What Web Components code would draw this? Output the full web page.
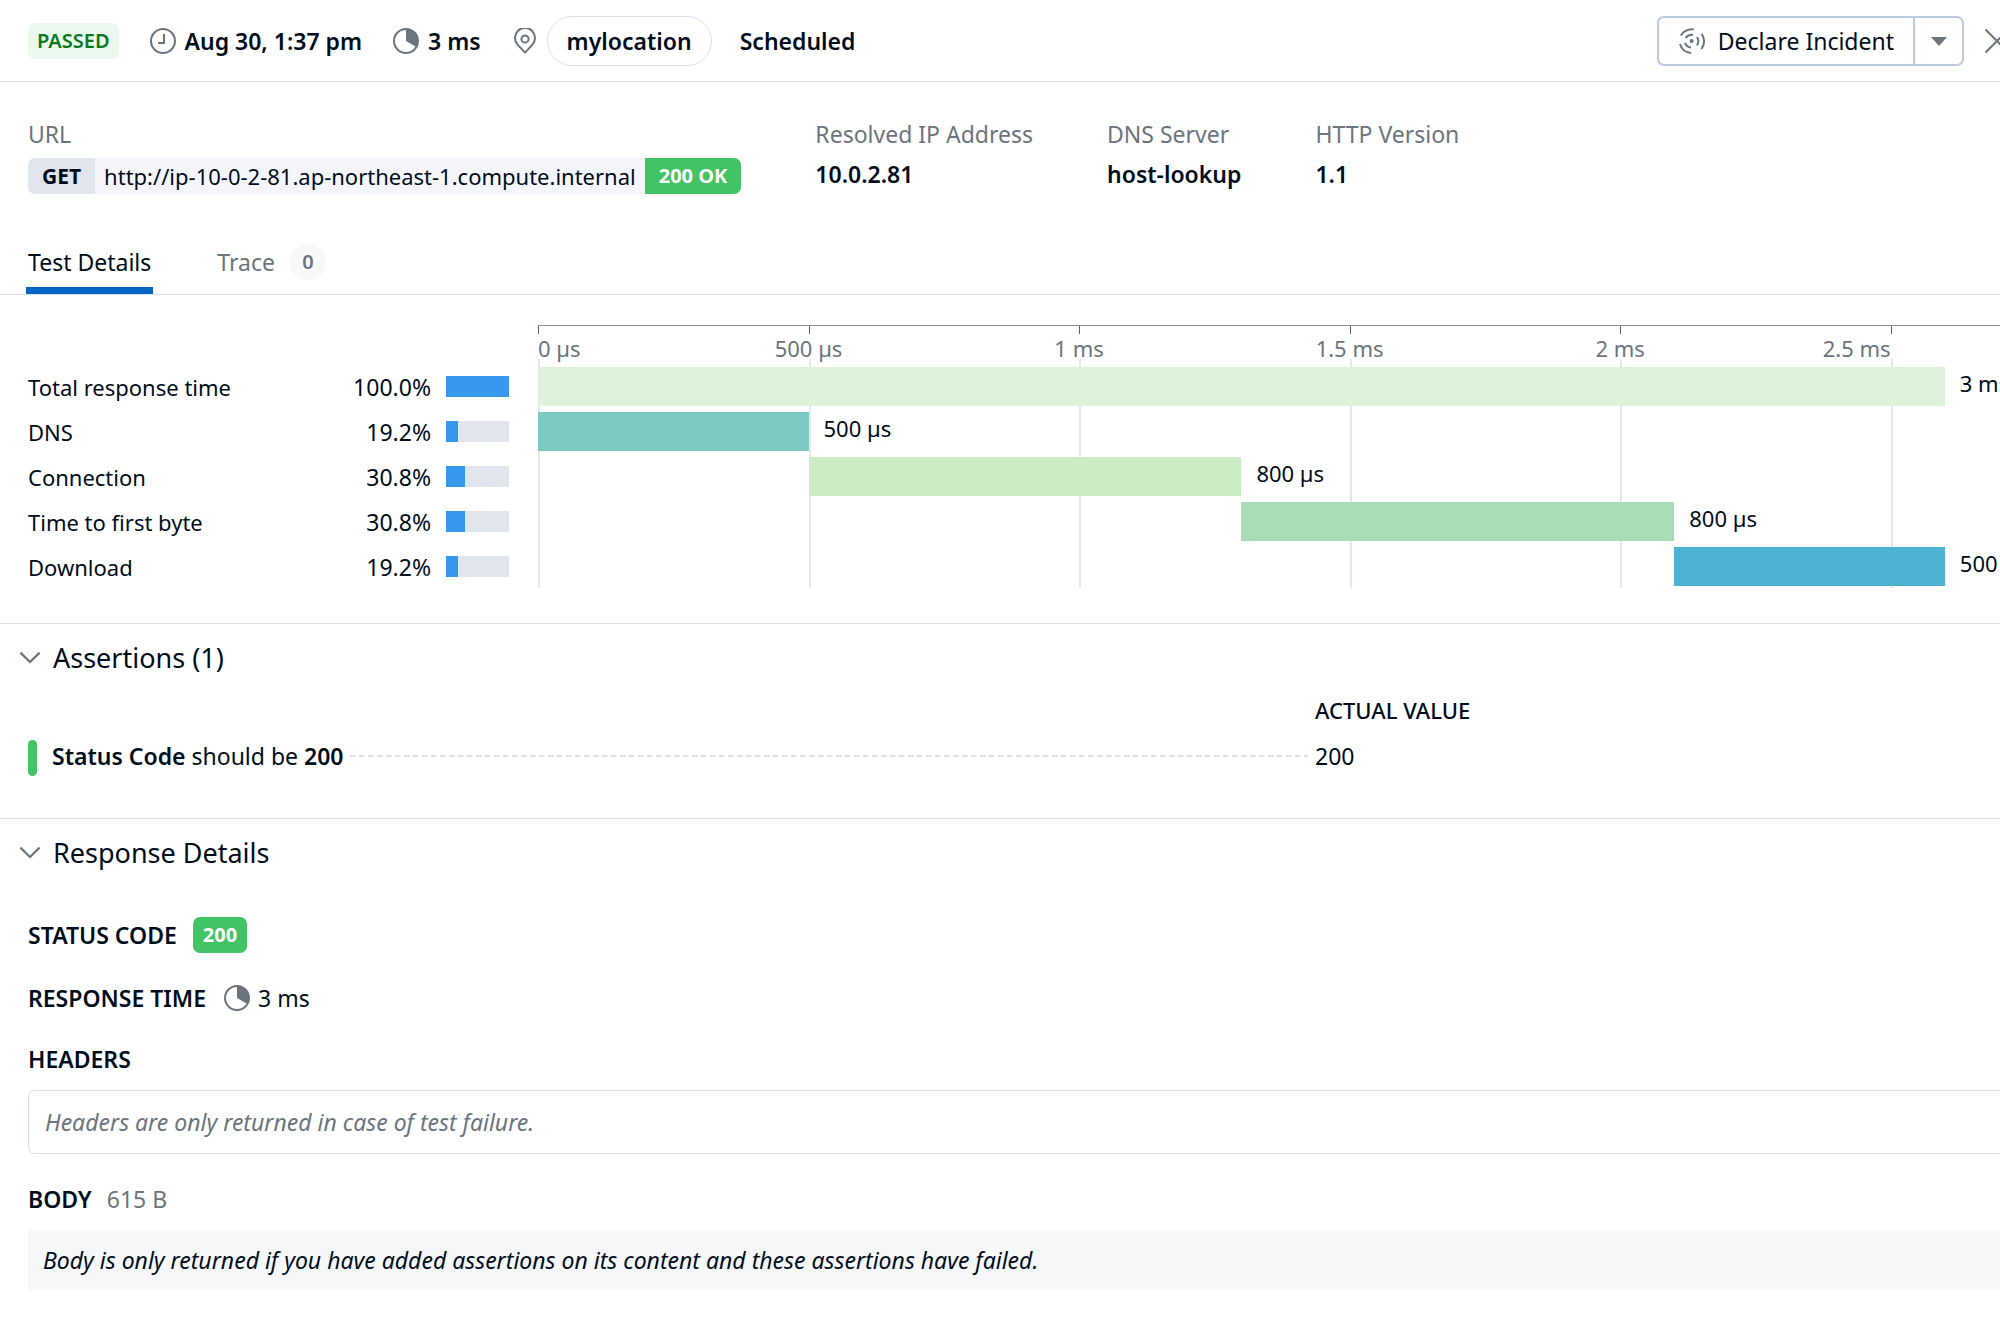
<!DOCTYPE html>
<html lang="en">
<head>
<meta charset="utf-8">
<title>Test result</title>
<style>
  :root {
    --text: #000d1c;
    --muted: #6b757f;
    --line: #dce0ea;
    --green: #41c464;
  }
  body {
    margin: 0;
    background: #fff;
    color: var(--text);
    font: 23px/32px "Noto Sans", sans-serif;
    overflow-x: hidden;
  }
</style>
</head>
<body>
<result-page></result-page>
<script>
const RESET = `
  *, *::before { box-sizing: border-box; }
  button { font: inherit; color: inherit; background: none; border: 0; padding: 0; margin: 0; cursor: pointer; }
  a { color: inherit; text-decoration: none; }
  h2, h3, p, dl, dd, dt, ul { margin: 0; padding: 0; font: inherit; list-style: none; }
`;
function define(name, css, html) {
  const template = document.createElement('template');
  template.innerHTML = `<style>${RESET}${css}</style>${html}`;
  customElements.define(name, class extends HTMLElement {
    constructor() {
      super();
      this.attachShadow({ mode: 'open' }).append(template.content.cloneNode(true));
    }
  });
}

/* ---------- icons ---------- */
const ICONS = {
  clock: [26, 26, '<circle cx="13" cy="13" r="12" fill="none" stroke="currentColor" stroke-width="2"/><path d="M14 6v9H8" fill="none" stroke="currentColor" stroke-width="2"/>'],
  pie: [26, 26, '<circle cx="13" cy="13" r="12" fill="none" stroke="currentColor" stroke-width="2"/><path d="M13 1v12l10.8 6.2A12.4 12.4 0 0 0 13 1z" fill="currentColor"/>'],
  pin: [26, 26, '<path d="M13 24.600 5.600 16.600A10 10 0 1 1 20.400 16.600z" fill="none" stroke="currentColor" stroke-width="2" stroke-linejoin="round"/><circle cx="13" cy="11" r="3.600" fill="none" stroke="currentColor" stroke-width="2"/>'],
  chevron: [22, 14, '<path d="M1.4 1.6 11 11 20.600 1.600" fill="none" stroke="currentColor" stroke-width="2.200"/>'],
  caret: [16, 9, '<path d="M0 0h16L8 9z" fill="currentColor"/>'],
  close: [26, 26, '<path d="M1.500 1.500l23 23M24.500 1.500l-23 23" fill="none" stroke="currentColor" stroke-width="2"/>'],
  siren: [26, 26, '<g fill="none" stroke="currentColor" stroke-width="2"><path d="M1.800 7.600C4.400 3.200 9 1 14.800 1.300"/><path d="M1 16C2.400 21.200 6.600 24.600 12.200 25"/><path d="M22.600 5.800C25.800 11 25.800 16.400 22.400 21"/><path d="M6.600 10C8.200 7.600 10.600 6.600 14 6.900"/><path d="M6 14.800C7 17.600 9 19.200 12 19.500"/><path d="M18 9C19.800 11.600 19.800 14.400 18 17.400"/></g><circle cx="12.600" cy="13" r="2" fill="currentColor"/>']
};
customElements.define('ui-icon', class extends HTMLElement {
  constructor() {
    super();
    this.attachShadow({ mode: 'open' });
  }
  connectedCallback() {
    const [w, h, body] = ICONS[this.getAttribute('name')];
    this.shadowRoot.innerHTML = `<style>:host{display:inline-flex;flex:none;color:var(--muted)}svg{display:block}</style>
      <svg width="${w}" height="${h}" viewBox="0 0 ${w} ${h}" aria-hidden="true">${body}</svg>`;
  }
});

/* ---------- small parts ---------- */
define('status-badge', `
  :host { display: inline-block; height: 36px; line-height: 36px; padding: 0 10px; border-radius: 7px;
    font-size: 20px; font-weight: 700; background: var(--green); color: #fff; }
  :host([tone="soft"]) { padding: 0 9px; background: #ebf8ee; color: #0d7a22; font-weight: 600; }
`, `<slot></slot>`);

define('info-item', `
  :host { display: block; }
  dl { display: flex; flex-direction: column; gap: 8px; }
  dt { color: var(--muted); }
  dd { font-weight: 600; }
`, `<dl><dt><slot name="label"></slot></dt><dd><slot></slot></dd></dl>`);

define('request-line', `
  :host { display: flex; height: 36px; line-height: 36px; font-size: 22px; font-weight: 400; border-radius: 7px; overflow: hidden; }
  span { padding: 0 14px; }
  .method { background: #e1e5ed; font-size: 21px; font-weight: 700; }
  .url { padding: 0 9px; background: #f5f6fb; }
  .status { background: var(--green); color: #fff; font-size: 20px; font-weight: 700; }
`, `<span class="method"><slot name="method"></slot></span><span class="url"><slot></slot></span><span class="status"><slot name="status"></slot></span>`);

/* ---------- header ---------- */
define('result-header', `
  :host { display: block; overflow: hidden; border-bottom: 1px solid var(--line); }
  header { display: flex; align-items: center; padding: 16px 0 15px 28px; font-weight: 600; white-space: nowrap; }
  .meta { display: flex; align-items: center; gap: 9px; margin-left: 31px; }
  .pill { display: block; height: 50px; line-height: 48px; padding: 0 19px;
    border: 1px solid var(--line); border-radius: 25px; }
  .trigger { margin-left: 28px; }
  .split { display: flex; height: 50px; margin-left: auto; border: 2px solid #bccbe4; border-radius: 7px; font-weight: 400; }
  .split button { display: flex; align-items: center; }
  .declare { gap: 13px; padding: 0 19px 0 20px; }
  .more { width: 49px; justify-content: center; border-left: 2px solid #bccbe4; }
  .close { display: flex; margin: 0 -10px 0 20px; }
`, `<header>
  <status-badge tone="soft">PASSED</status-badge>
  <span class="meta"><ui-icon name="clock"></ui-icon><time>Aug 30, 1:37 pm</time></span>
  <span class="meta"><ui-icon name="pie"></ui-icon><span>3 ms</span></span>
  <span class="meta"><ui-icon name="pin"></ui-icon><a class="pill" href="#">mylocation</a></span>
  <span class="trigger">Scheduled</span>
  <div class="split">
    <button class="declare" type="button"><ui-icon name="siren"></ui-icon><span>Declare Incident</span></button>
    <button class="more" type="button" aria-label="More actions"><ui-icon name="caret"></ui-icon></button>
  </div>
  <button class="close" type="button" aria-label="Close"><ui-icon name="close"></ui-icon></button>
</header>`);

define('request-summary', `
  :host { display: flex; gap: 74px; padding: 36px 28px 50px; }
`, `
  <info-item><span slot="label">URL</span><request-line><span slot="method">GET</span>http://ip-10-0-2-81.ap-northeast-1.compute.internal<span slot="status">200 OK</span></request-line></info-item>
  <info-item><span slot="label">Resolved IP Address</span>10.0.2.81</info-item>
  <info-item><span slot="label">DNS Server</span>host-lookup</info-item>
  <info-item><span slot="label">HTTP Version</span>1.1</info-item>
`);

define('result-tabs', `
  nav { display: flex; gap: 62px; padding-left: 26px; border-bottom: 1px solid var(--line); }
  :host { display: block; }
  a { display: flex; align-items: center; gap: 15px; height: 50px; padding: 0 2px 7px; border-bottom: 7px solid transparent; color: var(--muted); }
  a[aria-current] { color: var(--text); border-color: #0563c1; }
  .count { width: 36px; height: 36px; line-height: 36px; border-radius: 18px; text-align: center; background: #f7f8fa;
    font-size: 20px; font-weight: 600; }
`, `<nav><a href="#" aria-current="page">Test Details</a><a href="#">Trace <span class="count">0</span></a></nav>`);

/* ---------- timing chart ---------- */
const DOMAIN = 2702;
const PHASES = [
  { name: 'Total response time', share: '100.0%', start: 0, length: 2600, label: '3 ms', color: '#dff3da' },
  { name: 'DNS', share: '19.2%', start: 0, length: 500, label: '500 µs', color: '#7bcbc1' },
  { name: 'Connection', share: '30.8%', start: 500, length: 800, label: '800 µs', color: '#cdebc5' },
  { name: 'Time to first byte', share: '30.8%', start: 1300, length: 800, label: '800 µs', color: '#a9ddb5' },
  { name: 'Download', share: '19.2%', start: 2100, length: 500, label: '500 µs', color: '#4eb2d3' }
];
const TICKS = ['0 µs', '500 µs', '1 ms', '1.5 ms', '2 ms', '2.5 ms'];

define('phase-table', `
  :host { display: block; }
  table { width: 100%; border-collapse: collapse; }
  tr { height: 45px; }
  th, td { padding: 0; font-weight: 400; text-align: left; font-size: 22px; line-height: 32px; }
  .share { text-align: right; padding-right: 15px; font-size: 23px; }
  .meter { width: 63px; }
  .meter div { height: 21px; background: #e1e5ed; }
  .meter i { display: block; height: 100%; background: #3598ec; }
`, `<table><tbody>${PHASES.map(p => `<tr><th scope="row">${p.name}</th><td class="share">${p.share}</td>
  <td class="meter"><div><i style="width:${p.share}"></i></div></td></tr>`).join('')}</tbody></table>`);

define('phase-waterfall', `
  :host { display: block; overflow: hidden; font-size: 22px; white-space: nowrap; --step: calc(100% / ${DOMAIN / 500}); }
  .axis { display: flex; border-top: 1px solid #868d97; color: var(--muted); }
  .tick { flex: 0 0 var(--step); }
  .tick::before { content: ""; display: block; width: 1px; height: 8px; background: #59626d; }
  .tick span { display: block; width: 100%; line-height: 29px; margin-left: -50%; text-align: center; }
  .tick:first-child span { margin-left: 0; text-align: left; }
  .tick:last-child span { margin-left: -100%; text-align: right; }
  .plot { display: flex; flex-direction: column; gap: 6px; margin-top: -4px; padding: 8px 0 2px;
    background: repeating-linear-gradient(to right, #e4e7f0 0 2px, transparent 2px var(--step)); }
  .row { display: flex; height: 39px; }
  .bar { flex: none; }
  .row span { line-height: 33px; padding-left: 15px; }
`, `<div class="axis">${TICKS.map(t => `<div class="tick"><span>${t}</span></div>`).join('')}</div>
<div class="plot">${PHASES.map(p => `<div class="row"><div class="bar" style="margin-left:${p.start / DOMAIN * 100}%;width:${p.length / DOMAIN * 100}%;background:${p.color}"></div><span>${p.label}</span></div>`).join('')}</div>`);

define('timing-chart', `
  :host { display: flex; gap: 29px; padding: 30px 0 34px 28px; }
  phase-table { flex: 0 0 481px; padding-top: 39px; }
  phase-waterfall { flex: 1; min-width: 0; }
`, `<phase-table></phase-table><phase-waterfall></phase-waterfall>`);

/* ---------- collapsible sections ---------- */
define('fold-section', `
  :host { display: block; border-top: 1px solid var(--line); }
  h2 button { display: flex; align-items: center; gap: 12px; padding: 16px 19px 0; font-size: 27px; line-height: 36px; }
  .body { padding-left: 28px; }
`, `<h2><button type="button" aria-expanded="true"><ui-icon name="chevron"></ui-icon><slot name="title"></slot></button></h2><div class="body"><slot></slot></div>`);

define('assertion-list', `
  :host { display: grid; grid-template-columns: 1287fr 685fr; row-gap: 14px; padding: 18px 0 42px; }
  .head { grid-column: 2; font-size: 22px; font-weight: 500; }
  .rule { display: flex; height: 36px; }
  .mark { flex: none; width: 9px; margin-right: 15px; border-radius: 5px; background: var(--green); }
  b { font-weight: 600; }
  .leader { flex: 1; height: 2px; margin: 15px 7px 0;
    background: repeating-linear-gradient(to right, var(--line) 0 5px, transparent 6px 9px); }
`, `<div class="head">ACTUAL VALUE</div>
<div class="rule"><span class="mark"></span><p><b>Status Code</b> should be <b>200</b></p><span class="leader"></span></div>
<div class="actual">200</div>`);

define('response-details', `
  :host { display: flex; flex-direction: column; padding: 46px 0 31px; }
  .line { display: flex; align-items: center; height: 36px; margin-bottom: 27px; }
  h3 { font-weight: 600; }
  status-badge { margin-left: 16px; }
  .time { display: flex; align-items: center; gap: 8px; margin-left: 18px; }
  .headers { margin: 15px 0 29px; padding: 15px 16px; border: 1px solid var(--line); border-right: 0; border-radius: 7px 0 0 7px;
    font-style: italic; color: var(--muted); }
  .title { display: flex; gap: 15px; }
  .size { color: var(--muted); }
  .payload { margin-top: 15px; padding: 14px 15px; background: #f6f7f8; font-style: italic; }
`, `<div class="line"><h3>STATUS CODE</h3><status-badge>200</status-badge></div>
<div class="line"><h3>RESPONSE TIME</h3><span class="time"><ui-icon name="pie"></ui-icon><span>3 ms</span></span></div>
<h3>HEADERS</h3>
<p class="headers">Headers are only returned in case of test failure.</p>
<div class="title"><h3>BODY</h3><span class="size">615 B</span></div>
<p class="payload">Body is only returned if you have added assertions on its content and these assertions have failed.</p>`);

define('result-page', `:host { display: block; }`, `
  <result-header></result-header>
  <main>
    <request-summary></request-summary>
    <result-tabs></result-tabs>
    <timing-chart></timing-chart>
    <fold-section><span slot="title">Assertions (1)</span><assertion-list></assertion-list></fold-section>
    <fold-section><span slot="title">Response Details</span><response-details></response-details></fold-section>
  </main>`);
</script>
</body>
</html>
